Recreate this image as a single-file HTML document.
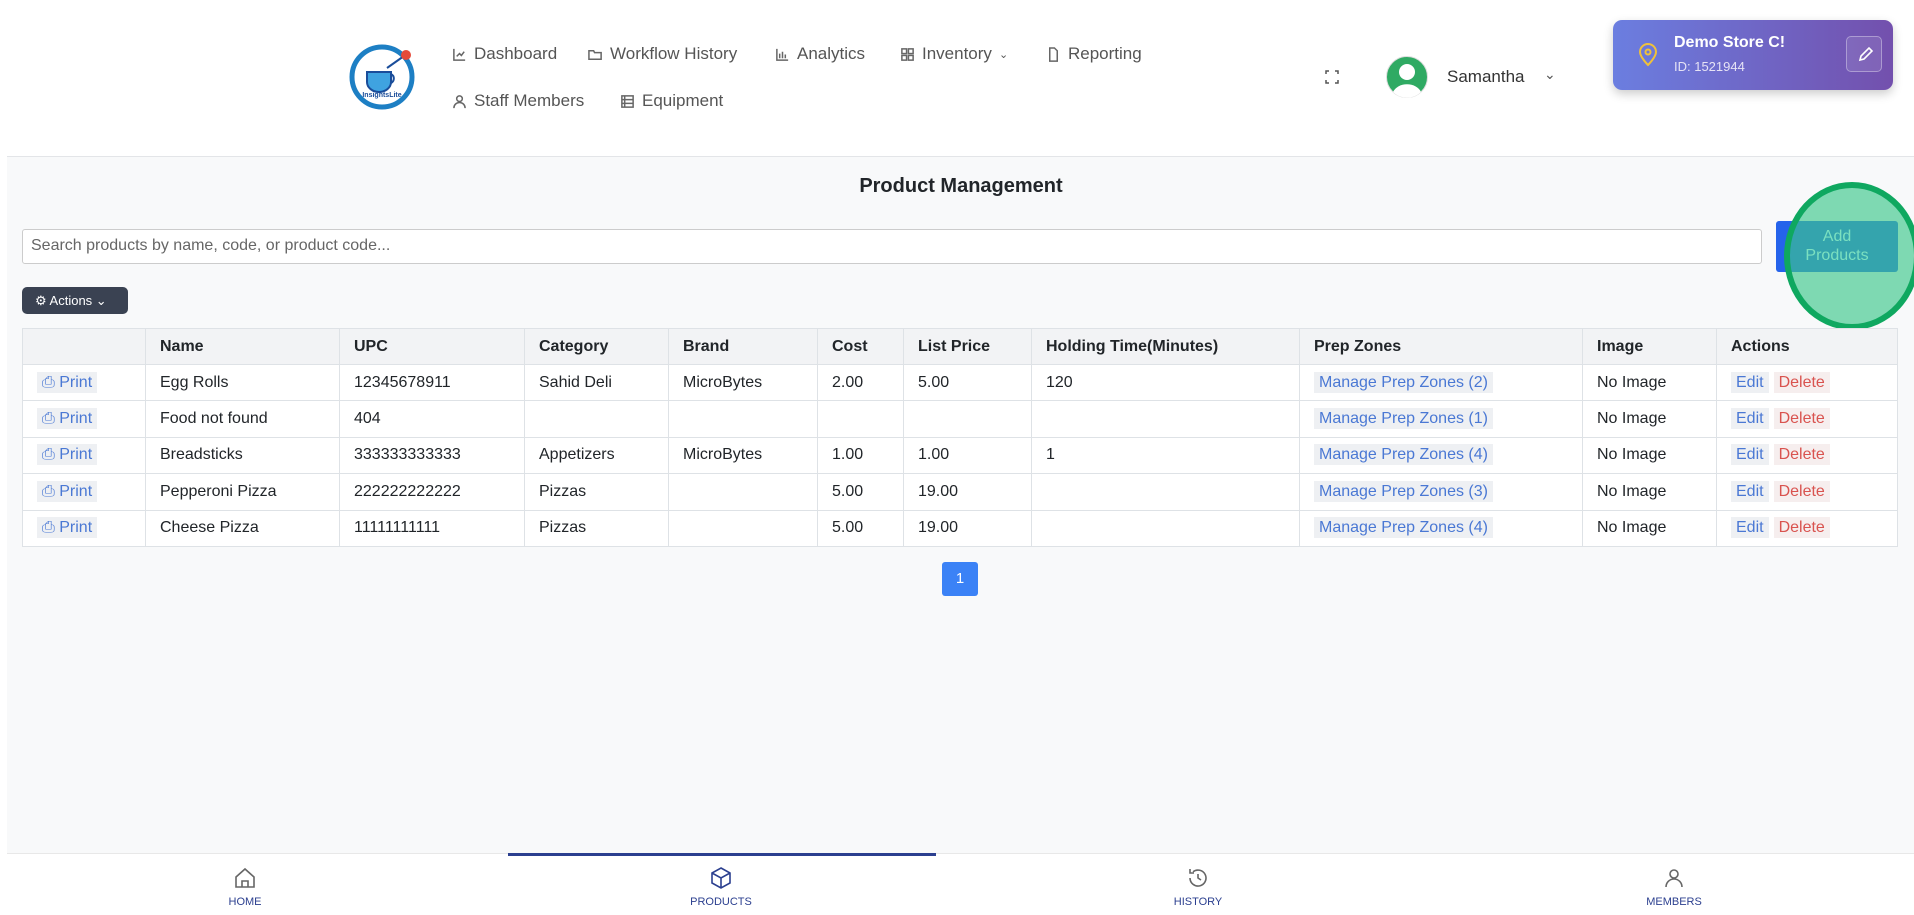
<!DOCTYPE html>
<html><head><meta charset="utf-8"><style>
*{box-sizing:border-box;margin:0;padding:0}
body{width:1914px;height:915px;overflow:hidden;background:#f8f9fa;font-family:"Liberation Sans",sans-serif;color:#212529;position:relative}
.hdr{position:absolute;left:7px;top:0;width:1907px;height:157px;background:#fff;border-bottom:1px solid #e3e5e8}
.lstrip{position:absolute;left:0;top:0;width:7px;height:915px;background:#fff}
.nav{position:absolute;font-size:17px;color:#555;display:flex;align-items:center;gap:7px;white-space:nowrap}
.nav svg{width:15px;height:15px;stroke:#666;fill:none;stroke-width:1.6}
.abs{position:absolute}
table{position:absolute;left:22px;top:328px;width:1876px;border-collapse:collapse;background:#fff;font-size:16px}
td,th{border:1px solid #dee2e6;height:36.4px;padding:0 14px;text-align:left;white-space:nowrap}
th{background:#f2f3f5;font-weight:bold;height:36px}
.tag{background:#eef0f3;color:#4a78d4;padding:2px 5px}
.del{background:#f6eeee;color:#d9534f;padding:2px 5px;margin-left:5px}
.bn{position:absolute;top:853px;left:7px;width:1907px;height:62px;background:#fff;border-top:1px solid #e8e8e8}
.bi{position:absolute;text-align:center;font-size:11px;color:#2b3f8f;width:120px;margin-left:-60px}
.bi svg{display:block;margin:10px auto 6px;width:24px;height:24px;fill:none;stroke:#666;stroke-width:1.6}
</style></head><body>
<div class="hdr"></div><div class="lstrip"></div>
<svg class="abs" style="left:349px;top:44px" width="66" height="66" viewBox="0 0 66 66"><circle cx="33" cy="33" r="30" fill="#fff" stroke="#1d7fc4" stroke-width="5"/><path d="M18 28h24v10a12 10 0 0 1-24 0z" fill="#3fa3e0" stroke="#1a4d9a" stroke-width="2"/><path d="M42 30a5 5 0 0 1 0 9" stroke="#1a4d9a" stroke-width="2" fill="none"/><line x1="38" y1="24" x2="55" y2="12" stroke="#1a4d9a" stroke-width="2"/><circle cx="57" cy="11" r="5" fill="#e64a3a"/><text x="33" y="53" font-size="7" text-anchor="middle" fill="#1a4d9a" font-weight="bold">InsightsLite</text></svg>
<div class="nav" style="left:452px;top:44px"><svg viewBox="0 0 16 16"><path d="M2 2v12h12M5 10l3-3 2 2 3-4"/></svg>Dashboard</div>
<div class="nav" style="left:588px;top:44px"><svg viewBox="0 0 16 16"><path d="M1 4h5l1 2h7v7H1z"/></svg>Workflow History</div>
<div class="nav" style="left:775px;top:44px"><svg viewBox="0 0 16 16"><path d="M2 2v12h12M5 12V7M8 12V5M11 12V8"/></svg>Analytics</div>
<div class="nav" style="left:900px;top:44px"><svg viewBox="0 0 16 16"><rect x="2" y="2" width="5" height="5"/><rect x="9" y="2" width="5" height="5"/><rect x="2" y="9" width="5" height="5"/><rect x="9" y="9" width="5" height="5"/></svg>Inventory <span style="font-size:11px">&#8964;</span></div>
<div class="nav" style="left:1046px;top:44px"><svg viewBox="0 0 16 16"><path d="M4 1h5l3 3v11H4z"/></svg>Reporting</div>
<div class="nav" style="left:452px;top:91px"><svg viewBox="0 0 16 16"><circle cx="8" cy="5" r="3"/><path d="M2 15a6 6 0 0 1 12 0"/></svg>Staff Members</div>
<div class="nav" style="left:620px;top:91px"><svg viewBox="0 0 16 16"><rect x="2" y="2" width="12" height="12"/><path d="M2 6h12M2 10h12M5 2v12"/></svg>Equipment</div>
<svg class="abs" style="left:1325px;top:70px" width="14" height="14" viewBox="0 0 14 14" fill="none" stroke="#555" stroke-width="1.5"><path d="M1 4V1h3M10 1h3v3M13 10v3h-3M4 13H1v-3"/></svg>
<svg class="abs" style="left:1386px;top:56px" width="42" height="42" viewBox="0 0 42 42"><circle cx="21" cy="21" r="20.5" fill="#2faa63" stroke="#ddd"/><circle cx="21" cy="16" r="8" fill="#fff"/><path d="M7 36a15 12 0 0 1 28 0 20 20 0 0 1-28 0z" fill="#fff"/></svg>
<div class="abs" style="left:1447px;top:67px;font-size:17px;color:#333">Samantha</div>
<div class="abs" style="left:1544px;top:66px;font-size:14px;color:#555">&#8964;</div>
<div class="abs" style="left:1613px;top:20px;width:280px;height:70px;border-radius:9px;background:linear-gradient(90deg,#6b7ee0,#7350ad);box-shadow:0 4px 10px rgba(0,0,0,.2)"></div>
<svg class="abs" style="left:1638px;top:43px" width="20" height="24" viewBox="0 0 20 24" fill="none" stroke="#f0c13a" stroke-width="2"><path d="M10 22s-8-8-8-13a8 8 0 0 1 16 0c0 5-8 13-8 13z"/><circle cx="10" cy="9" r="2.5"/></svg>
<div class="abs" style="left:1674px;top:34px;color:#fff;font-weight:bold;font-size:16px">Demo Store C!</div>
<div class="abs" style="left:1674px;top:59px;color:#e6e3f5;font-size:13px">ID: 1521944</div>
<div class="abs" style="left:1846px;top:36px;width:36px;height:36px;border:1px solid rgba(255,255,255,.35);border-radius:5px;background:rgba(255,255,255,.1)"><svg width="36" height="36" viewBox="0 0 36 36" fill="none" stroke="#fff" stroke-width="1.6"><path d="M13 23l1-4 8-8 3 3-8 8z"/></svg></div>
<div class="abs" style="left:0;width:1922px;top:175px;text-align:center;font-weight:bold;font-size:20px">Product Management</div>
<div class="abs" style="left:22px;top:229px;width:1740px;height:35px;background:#fff;border:1px solid #ccc;border-radius:3px;font-size:16px;color:#666;padding:7px 8px">Search products by name, code, or product code...</div>
<div class="abs" style="left:1776px;top:221px;width:122px;height:51px;background:#2563eb;border-radius:3px"></div>
<div class="abs" style="left:1784px;top:182px;width:136px;height:148px;border-radius:50%;background:rgba(60,200,140,.65);border:6px solid #0fa860"></div>
<div class="abs" style="left:1776px;top:227px;width:122px;text-align:center;color:#7be0c0;font-size:16px;line-height:19px">Add<br>Products</div>
<div class="abs" style="left:22px;top:287px;width:106px;height:27px;background:#3a4252;border-radius:5px;color:#fff;font-size:13px;padding:6px 0 0 13px">&#9881; Actions &#8964;</div>
<table>
<tr><th style="width:123px"></th><th style="width:194px">Name</th><th style="width:185px">UPC</th><th style="width:144px">Category</th><th style="width:149px">Brand</th><th style="width:86px">Cost</th><th style="width:128px">List Price</th><th style="width:268px">Holding Time(Minutes)</th><th style="width:283px">Prep Zones</th><th style="width:134px">Image</th><th>Actions</th></tr>
<tr><td><span class="tag">&#9113; Print</span></td><td>Egg Rolls</td><td>12345678911</td><td>Sahid Deli</td><td>MicroBytes</td><td>2.00</td><td>5.00</td><td>120</td><td><span class="tag">Manage Prep Zones (2)</span></td><td>No Image</td><td><span class="tag">Edit</span><span class="del">Delete</span></td></tr>
<tr><td><span class="tag">&#9113; Print</span></td><td>Food not found</td><td>404</td><td></td><td></td><td></td><td></td><td></td><td><span class="tag">Manage Prep Zones (1)</span></td><td>No Image</td><td><span class="tag">Edit</span><span class="del">Delete</span></td></tr>
<tr><td><span class="tag">&#9113; Print</span></td><td>Breadsticks</td><td>333333333333</td><td>Appetizers</td><td>MicroBytes</td><td>1.00</td><td>1.00</td><td>1</td><td><span class="tag">Manage Prep Zones (4)</span></td><td>No Image</td><td><span class="tag">Edit</span><span class="del">Delete</span></td></tr>
<tr><td><span class="tag">&#9113; Print</span></td><td>Pepperoni Pizza</td><td>222222222222</td><td>Pizzas</td><td></td><td>5.00</td><td>19.00</td><td></td><td><span class="tag">Manage Prep Zones (3)</span></td><td>No Image</td><td><span class="tag">Edit</span><span class="del">Delete</span></td></tr>
<tr><td><span class="tag">&#9113; Print</span></td><td>Cheese Pizza</td><td>11111111111</td><td>Pizzas</td><td></td><td>5.00</td><td>19.00</td><td></td><td><span class="tag">Manage Prep Zones (4)</span></td><td>No Image</td><td><span class="tag">Edit</span><span class="del">Delete</span></td></tr>
</table>
<div class="abs" style="left:942px;top:562px;width:36px;height:34px;background:#3b82f6;border-radius:3px;color:#fff;text-align:center;line-height:34px;font-size:15px">1</div>
<div class="bn"></div>
<div class="abs" style="left:508px;top:853px;width:428px;height:3px;background:#2b3f8f"></div>
<div class="bi" style="left:245px;top:856px"><svg viewBox="0 0 24 24"><path d="M3 11l9-8 9 8v10H3z M9 21v-6h6v6"/></svg>HOME</div>
<div class="bi" style="left:721px;top:856px"><svg viewBox="0 0 24 24" style="stroke:#2b3f8f"><path d="M12 2l9 5v10l-9 5-9-5V7z M3 7l9 5 9-5 M12 12v10"/></svg>PRODUCTS</div>
<div class="bi" style="left:1198px;top:856px"><svg viewBox="0 0 24 24"><path d="M4 12a8 8 0 1 0 3-6.2M4 3v4h4M12 8v4l3 2"/></svg>HISTORY</div>
<div class="bi" style="left:1674px;top:856px"><svg viewBox="0 0 24 24"><circle cx="12" cy="8" r="4"/><path d="M4 21a8 8 0 0 1 16 0"/></svg>MEMBERS</div>
</body></html>
